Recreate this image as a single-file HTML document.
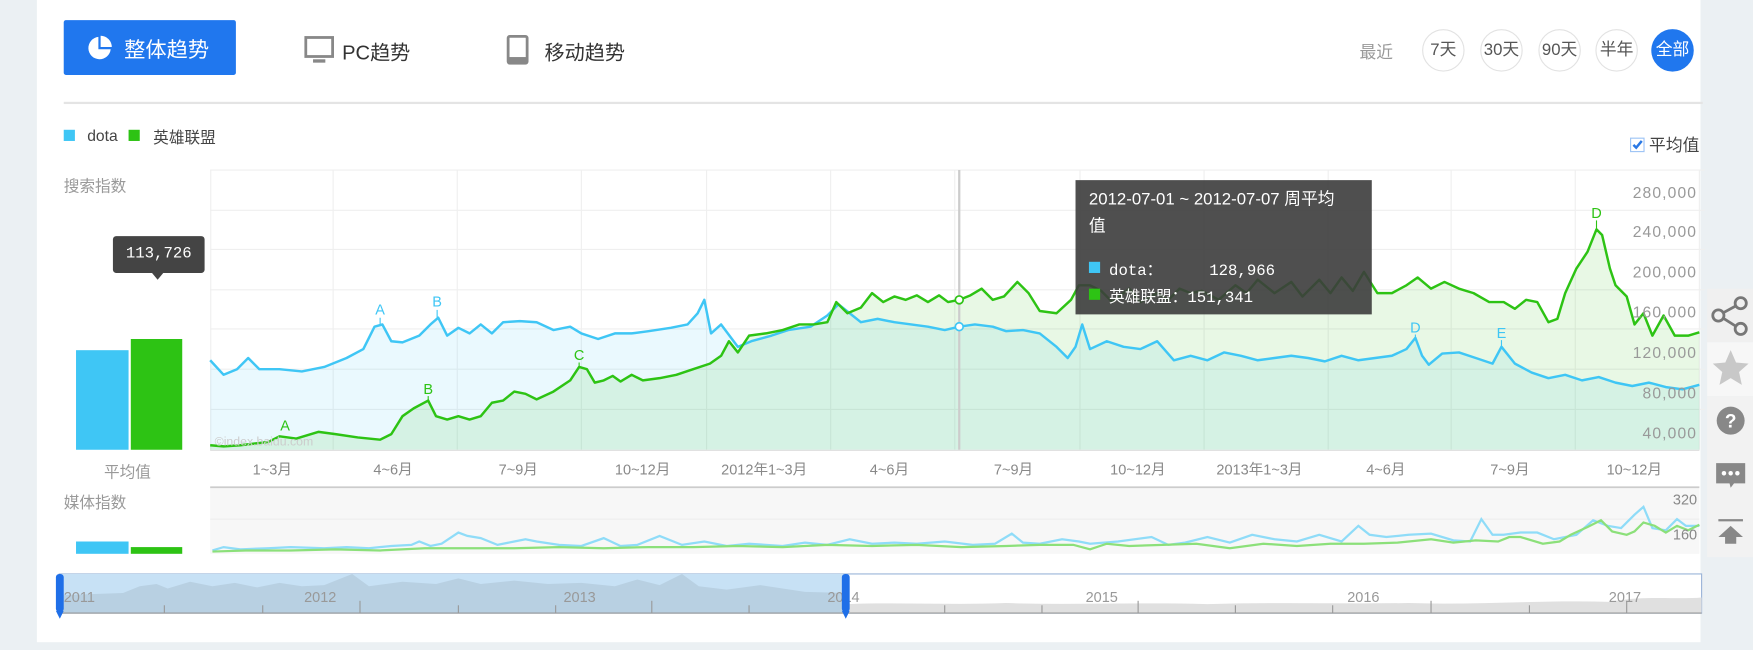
<!DOCTYPE html>
<html><head><meta charset="utf-8"><style>
html,body{margin:0;padding:0;width:1753px;height:650px;overflow:hidden;background:#ebf0f3;}
#w{position:absolute;left:0;top:0;width:1568px;height:581px;transform:scale(1.118,1.1188);transform-origin:0 0;font-family:"Liberation Sans","Noto Sans CJK SC",sans-serif;}
.a{position:absolute;}
.panel{left:33px;top:0;width:1488px;height:574px;background:#fff;}
.btn{left:57px;top:18px;width:154px;height:49px;background:#2077ee;border-radius:2px;color:#fff;font-size:19px;}
.tab{font-size:18px;color:#333;}
.circ{width:36px;height:36px;border:1px solid #e2e2e2;border-radius:50%;text-align:center;line-height:36px;font-size:15px;color:#555;top:26px;}
.g{color:#999;font-size:14px;}
.xl{font-size:13px;color:#888;top:409px;}
.yl{font-size:14px;color:#999;right:50px;text-align:right;letter-spacing:1px;}
.tb{left:1527px;width:41px;background:#f4f4f4;}
</style></head><body><div id="w">
<div class="a panel"></div>
<div class="a btn"><svg class="a" style="left:20px;top:13px" width="24" height="24" viewBox="0 0 24 24"><path d="M11 2 A10 10 0 1 0 22 13 L11 13 Z" fill="#fff"/><path d="M13 1 L13 11 L23 11 A10 10 0 0 0 13 1Z" fill="#fff"/></svg><span class="a" style="left:54px;top:12px">整体趋势</span></div>
<svg class="a" style="left:272px;top:32px" width="27" height="26" viewBox="0 0 27 26"><rect x="1.5" y="1.5" width="24" height="17" fill="none" stroke="#888" stroke-width="2.5"/><rect x="8" y="21" width="11" height="3" fill="#888"/></svg>
<span class="a tab" style="left:306px;top:33px">PC趋势</span>
<svg class="a" style="left:453px;top:31px" width="20" height="27" viewBox="0 0 20 27"><rect x="1.5" y="1.5" width="17" height="24" rx="1.5" fill="none" stroke="#888" stroke-width="2.5"/><rect x="1.5" y="20" width="17" height="5" fill="#888"/></svg>
<span class="a tab" style="left:487px;top:33px">移动趋势</span>
<span class="a" style="left:1216px;top:36px;font-size:15px;color:#999">最近</span>
<div class="a circ" style="left:1272px">7天</div>
<div class="a circ" style="left:1324px">30天</div>
<div class="a circ" style="left:1376px">90天</div>
<div class="a circ" style="left:1427px">半年</div>
<div class="a circ" style="left:1477px;background:#2077ee;border-color:#2077ee;color:#fff">全部</div>
<div class="a" style="left:57px;top:91px;width:1466px;height:2px;background:#e4e4e4"></div>
<div class="a" style="left:57px;top:116px;width:10px;height:10px;background:#3fc6f5"></div>
<span class="a" style="left:78px;top:113px;font-size:14px;color:#444">dota</span>
<div class="a" style="left:115px;top:116px;width:10px;height:10px;background:#2dc314"></div>
<span class="a" style="left:137px;top:113px;font-size:14px;color:#444">英雄联盟</span>
<div class="a" style="left:1458px;top:123px;width:11px;height:11px;border:1px solid #9cc3f5;background:#fff"><svg width="11" height="11" viewBox="0 0 11 11" style="position:absolute;left:0;top:0"><path d="M2 5.5 L4.5 8 L9.5 2" stroke="#2a78e4" stroke-width="2.2" fill="none"/></svg></div>
<span class="a" style="left:1475px;top:119px;font-size:15px;color:#444">平均值</span>
<span class="a g" style="left:57px;top:156px">搜索指数</span>
<span class="a g" style="left:57px;top:439px">媒体指数</span>
<span class="a g" style="left:93px;top:412px">平均值</span>
<div class="a" style="left:101px;top:211px;width:82px;height:33px;background:#444;border-radius:3px;color:#fff;font-family:'Liberation Mono',monospace;font-size:14px;line-height:33px;text-align:center">113,726</div>
<div class="a" style="left:136px;top:244px;width:0;height:0;border-left:5px solid transparent;border-right:5px solid transparent;border-top:6px solid #444"></div>
<div class="a" style="left:68px;top:313px;width:47px;height:89px;background:#3fc6f5"></div>
<div class="a" style="left:117px;top:303px;width:46px;height:99px;background:#2dc314"></div>
<div class="a" style="left:68px;top:484px;width:47px;height:11px;background:#3fc6f5"></div>
<div class="a" style="left:117px;top:489px;width:46px;height:6px;background:#2dc314"></div>

<svg class="a" style="left:0;top:0" width="1568" height="581" viewBox="0 0 1568 581">
<g stroke="#efefef" stroke-width="1">
<line x1="188" y1="152" x2="1525" y2="152"/><line x1="188" y1="188" x2="1525" y2="188"/><line x1="188" y1="223" x2="1525" y2="223"/><line x1="188" y1="259" x2="1525" y2="259"/><line x1="188" y1="294" x2="1525" y2="294"/><line x1="188" y1="330" x2="1525" y2="330"/><line x1="188" y1="366" x2="1525" y2="366"/>
<line x1="188.5" y1="152" x2="188.5" y2="402"/><line x1="298" y1="152" x2="298" y2="402"/><line x1="409" y1="152" x2="409" y2="402"/><line x1="520" y1="152" x2="520" y2="402"/><line x1="632" y1="152" x2="632" y2="402"/><line x1="743" y1="152" x2="743" y2="402"/><line x1="854" y1="152" x2="854" y2="402"/><line x1="966" y1="152" x2="966" y2="402"/><line x1="1077" y1="152" x2="1077" y2="402"/><line x1="1188" y1="152" x2="1188" y2="402"/><line x1="1298" y1="152" x2="1298" y2="402"/><line x1="1409" y1="152" x2="1409" y2="402"/><line x1="1520" y1="152" x2="1520" y2="402"/>
</g>
<polygon fill="#3fc6f5" fill-opacity="0.11" points="188,402 188,322 200,335 212,330 222,320 232,330 250,330 270,332 290,328 310,320 325,312 335,292 342,290 350,305 360,306 375,300 385,290 392,284 400,300 410,293 420,298 430,290 440,298 450,288 465,287 480,288 495,295 510,292 520,298 535,303 550,298 565,298 580,296 600,293 615,290 624,280 630,268 636,298 645,290 660,310 672,305 690,300 705,295 725,292 740,282 750,272 760,280 770,288 785,285 800,288 815,290 830,292 845,295 858,292 872,290 888,292 900,296 915,295 930,298 945,310 955,320 962,310 968,290 975,312 990,305 1005,310 1020,312 1035,305 1050,322 1065,318 1080,322 1095,315 1110,318 1125,322 1140,320 1155,318 1170,320 1185,323 1200,318 1215,322 1230,320 1245,318 1258,312 1266,302 1272,318 1278,326 1290,316 1305,315 1320,320 1335,325 1343,310 1355,325 1370,333 1385,338 1400,335 1415,340 1430,337 1445,342 1460,345 1475,342 1490,346 1505,348 1520,344 1520,402"/>
<polygon fill="#2dc314" fill-opacity="0.11" points="188,402 188,398 200,399 215,398 240,395 250,390 265,392 285,386 300,388 320,391 340,393 350,388 360,372 370,365 383,358 390,372 400,375 410,372 420,375 430,372 440,360 450,358 460,350 470,352 480,357 495,350 510,340 518,328 525,330 532,342 540,340 548,336 555,341 565,335 575,340 590,338 605,335 620,330 635,325 645,318 652,305 660,315 670,300 685,298 700,295 715,290 728,290 740,288 748,270 758,280 770,275 780,262 790,270 800,265 810,268 820,264 830,270 840,264 848,270 858,268 868,264 878,258 888,268 898,265 910,252 920,262 930,278 945,280 958,268 965,255 975,255 985,260 995,270 1010,258 1020,270 1035,262 1045,268 1055,258 1065,262 1075,260 1090,268 1105,255 1115,262 1125,250 1140,262 1155,252 1165,265 1180,250 1190,262 1200,248 1210,260 1220,243 1232,262 1245,262 1258,255 1268,248 1280,258 1292,252 1305,258 1318,262 1332,270 1345,270 1355,276 1365,268 1375,270 1385,288 1393,285 1400,262 1410,240 1420,225 1428,205 1433,210 1440,240 1445,255 1455,265 1462,290 1470,280 1478,300 1488,282 1498,300 1510,300 1520,297 1520,402"/>
<polyline fill="none" stroke="#3fc6f5" stroke-width="2.2" stroke-linejoin="round" points="188,322 200,335 212,330 222,320 232,330 250,330 270,332 290,328 310,320 325,312 335,292 342,290 350,305 360,306 375,300 385,290 392,284 400,300 410,293 420,298 430,290 440,298 450,288 465,287 480,288 495,295 510,292 520,298 535,303 550,298 565,298 580,296 600,293 615,290 624,280 630,268 636,298 645,290 660,310 672,305 690,300 705,295 725,292 740,282 750,272 760,280 770,288 785,285 800,288 815,290 830,292 845,295 858,292 872,290 888,292 900,296 915,295 930,298 945,310 955,320 962,310 968,290 975,312 990,305 1005,310 1020,312 1035,305 1050,322 1065,318 1080,322 1095,315 1110,318 1125,322 1140,320 1155,318 1170,320 1185,323 1200,318 1215,322 1230,320 1245,318 1258,312 1266,302 1272,318 1278,326 1290,316 1305,315 1320,320 1335,325 1343,310 1355,325 1370,333 1385,338 1400,335 1415,340 1430,337 1445,342 1460,345 1475,342 1490,346 1505,348 1520,344"/>
<polyline fill="none" stroke="#2dc314" stroke-width="2.2" stroke-linejoin="round" points="188,398 200,399 215,398 240,395 250,390 265,392 285,386 300,388 320,391 340,393 350,388 360,372 370,365 383,358 390,372 400,375 410,372 420,375 430,372 440,360 450,358 460,350 470,352 480,357 495,350 510,340 518,328 525,330 532,342 540,340 548,336 555,341 565,335 575,340 590,338 605,335 620,330 635,325 645,318 652,305 660,315 670,300 685,298 700,295 715,290 728,290 740,288 748,270 758,280 770,275 780,262 790,270 800,265 810,268 820,264 830,270 840,264 848,270 858,268 868,264 878,258 888,268 898,265 910,252 920,262 930,278 945,280 958,268 965,255 975,255 985,260 995,270 1010,258 1020,270 1035,262 1045,268 1055,258 1065,262 1075,260 1090,268 1105,255 1115,262 1125,250 1140,262 1155,252 1165,265 1180,250 1190,262 1200,248 1210,260 1220,243 1232,262 1245,262 1258,255 1268,248 1280,258 1292,252 1305,258 1318,262 1332,270 1345,270 1355,276 1365,268 1375,270 1385,288 1393,285 1400,262 1410,240 1420,225 1428,205 1433,210 1440,240 1445,255 1455,265 1462,290 1470,280 1478,300 1488,282 1498,300 1510,300 1520,297"/>
<line x1="858" y1="152" x2="858" y2="402" stroke="#ccc" stroke-width="2"/>
<circle cx="858" cy="292" r="3.5" fill="#fff" stroke="#3fc6f5" stroke-width="1.5"/>
<circle cx="858" cy="268" r="3.5" fill="#fff" stroke="#2dc314" stroke-width="1.5"/>
<g font-family="Liberation Sans" font-size="13" text-anchor="middle">
<g fill="#3fc6f5"><text x="340" y="281">A</text><text x="391" y="274">B</text><text x="1266" y="297">D</text><text x="1343" y="302">E</text></g>
<g fill="#2dc314"><text x="255" y="385">A</text><text x="383" y="352">B</text><text x="518" y="322">C</text><text x="1428" y="195">D</text></g>
</g>
<g stroke-width="1"><line x1="340" y1="284" x2="340" y2="290" stroke="#3fc6f5"/><line x1="391" y1="277" x2="391" y2="284" stroke="#3fc6f5"/><line x1="1266" y1="299" x2="1266" y2="302" stroke="#3fc6f5"/><line x1="1343" y1="304" x2="1343" y2="310" stroke="#3fc6f5"/><line x1="383" y1="354" x2="383" y2="358" stroke="#2dc314"/><line x1="518" y1="324" x2="518" y2="328" stroke="#2dc314"/><line x1="1428" y1="197" x2="1428" y2="205" stroke="#2dc314"/></g>
<text x="192" y="398" font-size="11" fill="#ccc" font-family="Liberation Sans">©index.baidu.com</text>
<line x1="188" y1="402.5" x2="1520" y2="402.5" stroke="#ddd"/>
<rect x="188" y="435" width="1332" height="60" fill="#f7f7f7"/>
<line x1="188" y1="435.5" x2="1520" y2="435.5" stroke="#ccc" stroke-width="1.5"/>
<line x1="188" y1="464" x2="1520" y2="464" stroke="#ececec"/>
<polyline fill="none" stroke="#8fdcf8" stroke-width="2" points="190,492 200,489 215,491 240,490 260,489 290,490 310,489 330,490 350,488 368,487 375,484 385,488 395,486 410,476 418,479 430,481 445,487 460,484 470,482 480,484 500,487 520,488 540,481 555,488 570,487 590,479 610,487 630,484 650,488 670,486 700,488 720,485 740,487 760,482 780,486 800,485 820,486 845,484 870,487 890,486 905,477 915,485 930,486 950,482 965,484 975,486 1000,484 1030,480 1045,487 1060,485 1080,480 1100,485 1120,478 1140,482 1160,484 1180,478 1200,484 1215,470 1225,478 1240,480 1260,478 1280,477 1300,483 1315,484 1325,464 1335,478 1345,478 1360,476 1375,476 1390,482 1410,478 1425,465 1438,470 1450,472 1462,460 1470,453 1478,472 1490,474 1500,464 1508,470 1520,470"/>
<polyline fill="none" stroke="#8ce07a" stroke-width="2" points="190,493 220,492 260,492 300,491 340,492 380,490 420,490 460,490 500,489 540,490 580,489 620,489 660,488 700,489 740,487 780,488 820,487 860,489 900,488 930,487 960,487 975,491 990,486 1010,488 1040,487 1070,486 1100,490 1130,486 1160,488 1190,486 1220,486 1250,485 1280,482 1300,485 1320,483 1340,484 1350,480 1360,480 1380,486 1395,484 1405,478 1420,471 1432,465 1442,475 1455,478 1462,475 1470,467 1480,470 1490,476 1500,470 1510,474 1520,469"/>
<text x="1518" y="451" font-size="13" fill="#888" text-anchor="end" font-family="Liberation Sans">320</text>
<text x="1518" y="482" font-size="13" fill="#888" text-anchor="end" font-family="Liberation Sans">160</text>
<rect x="53" y="513" width="1469" height="35" fill="#fff" stroke="#9ab4d8"/>
<path d="M758,548 L758,540 C800,538 850,541 900,539 C960,541 1020,538 1080,540 C1140,538 1200,540 1260,539 C1320,541 1380,536 1440,538 C1470,532 1500,536 1522,534 L1522,548 Z" fill="#e0e0e0"/>
<rect x="53" y="513" width="705" height="35" fill="#c7e1f5"/>
<path d="M53,548 L53,532 L110,530 L125,524 L140,522 L150,526 L170,520 L190,524 L210,521 L230,525 L250,521 L270,524 L290,523 L315,513 L330,524 L360,520 L390,522 L410,517 L430,522 L460,519 L490,522 L520,521 L550,524 L570,518 L590,523 L610,513 L625,524 L650,527 L680,523 L700,526 L720,529 L758,530 L758,548 Z" fill="#b8d0e2"/>
<g stroke="#999" stroke-width="1"><line x1="53" y1="548" x2="1522" y2="548"/>
<line x1="147" y1="541" x2="147" y2="548"/><line x1="235" y1="541" x2="235" y2="548"/><line x1="322" y1="537" x2="322" y2="548"/><line x1="410" y1="541" x2="410" y2="548"/><line x1="497" y1="541" x2="497" y2="548"/><line x1="583" y1="537" x2="583" y2="548"/><line x1="670" y1="541" x2="670" y2="548"/><line x1="845" y1="541" x2="845" y2="548"/><line x1="932" y1="541" x2="932" y2="548"/><line x1="1018" y1="537" x2="1018" y2="548"/><line x1="1105" y1="541" x2="1105" y2="548"/><line x1="1192" y1="541" x2="1192" y2="548"/><line x1="1280" y1="537" x2="1280" y2="548"/><line x1="1368" y1="541" x2="1368" y2="548"/><line x1="1455" y1="537" x2="1455" y2="548"/></g>
<g font-family="Liberation Sans" font-size="13" fill="#999"><text x="57" y="538">2011</text><text x="272" y="538">2012</text><text x="504" y="538">2013</text><text x="740" y="538">2014</text><text x="971" y="538">2015</text><text x="1205" y="538">2016</text><text x="1439" y="538">2017</text></g>
<rect x="50" y="513" width="7" height="34" rx="3" fill="#1f6fe8"/><path d="M50,546 L57,546 L53.5,553 Z" fill="#1f6fe8"/>
<rect x="753" y="513" width="7" height="34" rx="3" fill="#1f6fe8"/><path d="M753,546 L760,546 L756.5,553 Z" fill="#1f6fe8"/>
</svg>
<span class="a xl" style="left:226px">1~3月</span><span class="a xl" style="left:334px">4~6月</span><span class="a xl" style="left:446px">7~9月</span><span class="a xl" style="left:550px">10~12月</span><span class="a xl" style="left:645px">2012年1~3月</span><span class="a xl" style="left:778px">4~6月</span><span class="a xl" style="left:889px">7~9月</span><span class="a xl" style="left:993px">10~12月</span><span class="a xl" style="left:1088px">2013年1~3月</span><span class="a xl" style="left:1222px">4~6月</span><span class="a xl" style="left:1333px">7~9月</span><span class="a xl" style="left:1437px">10~12月</span>
<span class="a yl" style="top:164px">280,000</span><span class="a yl" style="top:199px">240,000</span><span class="a yl" style="top:235px">200,000</span><span class="a yl" style="top:271px">160,000</span><span class="a yl" style="top:307px">120,000</span><span class="a yl" style="top:343px">80,000</span><span class="a yl" style="top:379px">40,000</span>
<div class="a" style="left:962px;top:161px;width:265px;height:120px;background:rgba(60,60,60,0.9);color:#fff">
<div class="a" style="left:12px;top:6px;font-size:15px;line-height:24px;width:250px;white-space:nowrap">2012-07-01 ~ 2012-07-07 周平均<br>值</div>
<div class="a" style="left:12px;top:73px;width:10px;height:10px;background:#3fc6f5"></div>
<span class="a" style="left:30px;top:70px;font-family:'Liberation Mono','Noto Sans CJK SC',monospace;font-size:14px;white-space:pre">dota：     128,966</span>
<div class="a" style="left:12px;top:97px;width:10px;height:10px;background:#2dc314"></div>
<span class="a" style="left:30px;top:94px;font-family:'Liberation Mono','Noto Sans CJK SC',monospace;font-size:14px;white-space:pre">英雄联盟：151,341</span>
</div>
<div class="a tb" style="top:258px;height:48px;background:#f0f0f0"><svg width="41" height="48" viewBox="0 0 41 48"><g stroke="#777" stroke-width="2.5" fill="none"><circle cx="30" cy="13" r="5"/><circle cx="10" cy="24" r="5"/><circle cx="30" cy="36" r="5"/><line x1="25.5" y1="15.5" x2="14.5" y2="21.5"/><line x1="14.5" y1="26.5" x2="25.5" y2="33.5"/></g></svg></div>
<div class="a tb" style="top:306px;height:48px;background:#f7f7f7"><svg width="41" height="48" viewBox="0 0 41 48"><path d="M21,7 L25.8,18 L37,19 L28.5,26.5 L31,38 L21,32 L11,38 L13.5,26.5 L5,19 L16.2,18 Z" fill="#c8c8c8"/></svg></div>
<div class="a tb" style="top:354px;height:144px;background:#f2f2f2"><svg width="41" height="144" viewBox="0 0 41 144"><circle cx="21" cy="22" r="12.5" fill="#888"/><text x="21" y="28" text-anchor="middle" font-size="17" font-weight="bold" fill="#fff" font-family="Liberation Sans">?</text><path d="M8,60 h26 v18 h-10 l-3,4 l-1,-4 h-12 z" fill="#888"/><circle cx="15" cy="69" r="2" fill="#fff"/><circle cx="21" cy="69" r="2" fill="#fff"/><circle cx="27" cy="69" r="2" fill="#fff"/><rect x="10" y="110" width="22" height="2" fill="#888"/><path d="M21,116 L32,126 L26,126 L26,132 L16,132 L16,126 L10,126 Z" fill="#888"/></svg></div>
</div></body></html>
